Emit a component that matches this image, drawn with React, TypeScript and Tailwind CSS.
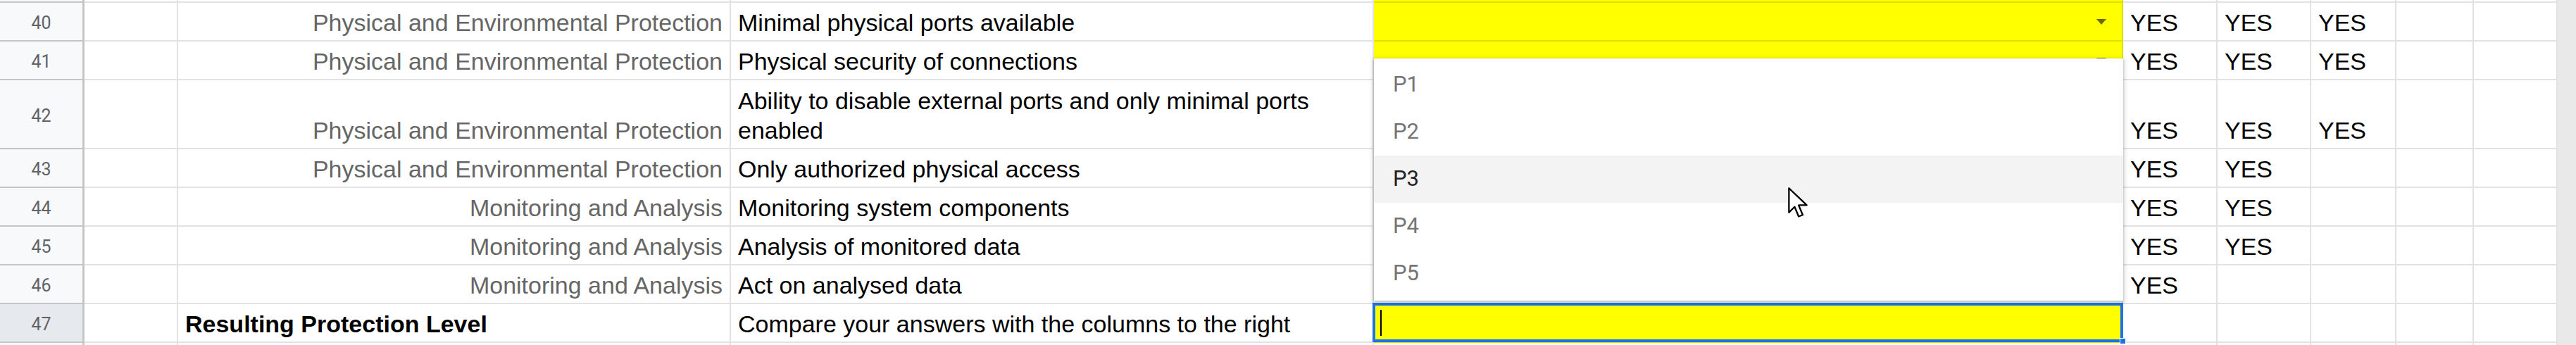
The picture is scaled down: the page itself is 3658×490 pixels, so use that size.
import React from "react";

type RowData = {
  n: number;
  tall?: boolean;
  c?: string;
  bold?: boolean;
  d?: React.ReactNode;
  e: "arrow" | "plain" | "edit" | "none";
  yes: number;
  selected?: boolean;
};

const rows: RowData[] = [
  { n: 40, c: "Physical and Environmental Protection", d: "Minimal physical ports available", e: "arrow", yes: 3 },
  { n: 41, c: "Physical and Environmental Protection", d: "Physical security of connections", e: "arrow", yes: 3 },
  {
    n: 42,
    tall: true,
    c: "Physical and Environmental Protection",
    d: (
      <>
        Ability to disable external ports and only minimal ports
        <br />
        enabled
      </>
    ),
    e: "none",
    yes: 3,
  },
  { n: 43, c: "Physical and Environmental Protection", d: "Only authorized physical access", e: "none", yes: 2 },
  { n: 44, c: "Monitoring and Analysis", d: "Monitoring system components", e: "none", yes: 2 },
  { n: 45, c: "Monitoring and Analysis", d: "Analysis of monitored data", e: "none", yes: 2 },
  { n: 46, c: "Monitoring and Analysis", d: "Act on analysed data", e: "none", yes: 1 },
  {
    n: 47,
    c: "Resulting Protection Level",
    bold: true,
    d: "Compare your answers with the columns to the right",
    e: "edit",
    yes: 0,
    selected: true,
  },
];

const gridCell = "shrink-0 border-r-2 border-b-2 border-[#e2e2e2]";
const textCell = "flex items-end pb-[4px] px-[10px] leading-[42px] whitespace-nowrap overflow-visible";

function Arrow() {
  return (
    <svg width="14" height="8" viewBox="0 0 14 8" className="block">
      <polygon points="0,0 14,0 7,8" fill="#6b6b00" />
    </svg>
  );
}

function Row({ r }: { r: RowData }) {
  const h = r.tall ? "h-[98px]" : "h-[55px]";
  return (
    <div className={`flex ${h}`}>
      <div
        className={`w-[120px] shrink-0 flex items-center justify-center pt-[5px] border-r-[3px] border-b-2 border-[#c4c7c5] font-['Roboto',sans-serif] text-[25px] text-[#5f6368] ${
          r.selected ? "bg-[#e6e9ed]" : "bg-[#f8f9fa]"
        }`}
      >
        {r.n}
      </div>
      <div className={`w-[133px] ${gridCell}`} />
      <div
        className={`w-[785px] ${gridCell} ${textCell} ${
          r.bold ? "justify-start font-bold text-black" : "justify-end text-[#666666]"
        }`}
      >
        {r.c}
      </div>
      <div className={`w-[913px] ${gridCell} ${textCell} justify-start text-black`}>
        <span>{r.d}</span>
      </div>
      {r.e === "arrow" ? (
        <div className="w-[1064px] shrink-0 border-r-2 border-b-2 border-[#e0e000] bg-[#ffff00] flex items-start justify-end pt-[23px] pr-[22px]">
          <Arrow />
        </div>
      ) : r.e === "edit" ? (
        <div className="w-[1064px] shrink-0 border-r-2 border-b-2 border-[#e0e000] bg-[#ffff00] relative">
          <div className="absolute -left-[2px] -top-[2px] -right-[2px] -bottom-[1px] border-[4px] border-[#1a73e8]" />
          <div className="absolute left-[9px] top-[8px] w-[2px] h-[37px] bg-black" />
          <div className="absolute -right-[6px] -bottom-[4px] w-[9px] h-[9px] bg-[#1a73e8] border border-white" />
        </div>
      ) : (
        <div className={`w-[1064px] ${gridCell}`} />
      )}
      <div className={`w-[134px] ${gridCell} ${textCell} justify-start text-black`}>{r.yes >= 1 ? "YES" : ""}</div>
      <div className={`w-[133px] ${gridCell} ${textCell} justify-start text-black`}>{r.yes >= 2 ? "YES" : ""}</div>
      <div className={`w-[121px] ${gridCell} ${textCell} justify-start text-black`}>{r.yes >= 3 ? "YES" : ""}</div>
      <div className={`w-[110px] ${gridCell}`} />
      <div className={`w-[119px] ${gridCell}`} />
    </div>
  );
}

function EdgeRow({ top }: { top: boolean }) {
  return (
    <div className={`flex ${top ? "h-[4px]" : "h-[3px]"}`}>
      <div className={`w-[120px] shrink-0 bg-[#f8f9fa] border-r-[3px] border-[#c4c7c5] ${top ? "border-b-2" : ""}`} />
      <div className={`w-[133px] shrink-0 border-r-2 border-[#e2e2e2] ${top ? "border-b-2" : ""}`} />
      <div className={`w-[785px] shrink-0 border-r-2 border-[#e2e2e2] ${top ? "border-b-2" : ""}`} />
      <div className={`w-[913px] shrink-0 border-r-2 border-[#e2e2e2] ${top ? "border-b-2" : ""}`} />
      <div
        className={`w-[1064px] shrink-0 border-r-2 ${
          top ? "border-b-2 border-[#e0e000] bg-[#ffff00]" : "border-[#e2e2e2]"
        }`}
      />
      <div className={`w-[134px] shrink-0 border-r-2 border-[#e2e2e2] ${top ? "border-b-2" : ""}`} />
      <div className={`w-[133px] shrink-0 border-r-2 border-[#e2e2e2] ${top ? "border-b-2" : ""}`} />
      <div className={`w-[121px] shrink-0 border-r-2 border-[#e2e2e2] ${top ? "border-b-2" : ""}`} />
      <div className={`w-[110px] shrink-0 border-r-2 border-[#e2e2e2] ${top ? "border-b-2" : ""}`} />
      <div className={`w-[119px] shrink-0 border-r-2 border-[#e2e2e2] ${top ? "border-b-2" : ""}`} />
    </div>
  );
}

export default function App() {
  const items = ["P1", "P2", "P3", "P4", "P5"];
  return (
    <div className="relative w-[3658px] h-[490px] overflow-hidden bg-white flex font-['Liberation_Sans',Arial,sans-serif] text-[34px]">
      <div className="w-[3632px] shrink-0 flex flex-col">
        <EdgeRow top />
        {rows.map((r) => (
          <Row key={r.n} r={r} />
        ))}
        <EdgeRow top={false} />
      </div>
      <div className="w-[26px] shrink-0 bg-[#e9e9e9]" />

      {/* Dropdown menu */}
      <div className="absolute left-[1951px] top-[83px] w-[1064px] h-[344px] bg-white py-[4px] shadow-[0_2px_6px_2px_rgba(60,64,67,0.18),0_1px_3px_rgba(60,64,67,0.3)] font-['Roboto',sans-serif] text-[31px]">
        {items.map((p) => (
          <div
            key={p}
            className={`h-[67px] flex items-center pl-[27px] ${
              p === "P3" ? "bg-[#f3f3f3] text-[#202124]" : "text-[#757575]"
            }`}
          >
            {p}
          </div>
        ))}
      </div>

      {/* Mouse cursor */}
      <svg
        className="absolute left-[2538px] top-[265px]"
        width="30"
        height="46"
        viewBox="0 0 13 20"
      >
        <polygon
          points="1,1 1,16 4.5,12.5 7,18.5 9.5,17.5 7,11.5 12,11.5"
          fill="white"
          stroke="black"
          strokeWidth="1"
          strokeLinejoin="round"
        />
      </svg>
    </div>
  );
}
